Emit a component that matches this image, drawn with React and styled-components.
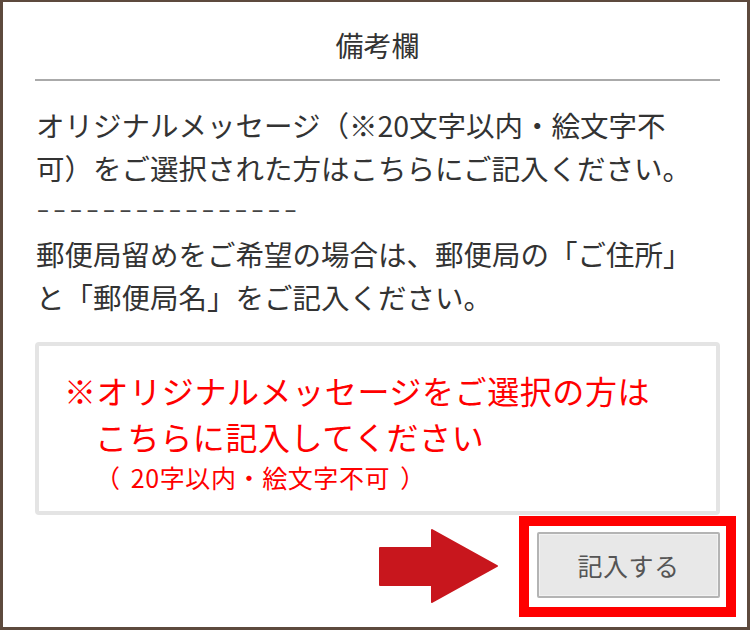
import React from 'react';
import styled, { createGlobalStyle } from 'styled-components';

const GlobalStyle = createGlobalStyle`
  html, body {
    margin: 0;
    padding: 0;
    background: #ffffff;
  }
  body {
    font-family: "Noto Sans CJK JP", "Noto Sans", sans-serif;
  }
`;

const Frame = styled.div`
  box-sizing: border-box;
  width: 750px;
  height: 630px;
  border-style: solid;
  border-color: #5d4a3d;
  border-width: 2px 3px 3px 3px;
  padding: 0 27px 10px 32px;
  background: #ffffff;
  display: flex;
  flex-direction: column;
  color: #333333;
`;

const Header = styled.h2`
  margin: 0;
  padding: 22px 0 13px;
  line-height: 42px;
  font-size: 28px;
  font-weight: 400;
  text-align: center;
  color: #333333;
  border-bottom: 2px solid #aaaaaa;
`;

const Notes = styled.div`
  margin: 22px 0 24px;
  font-size: 28.5px;
  line-height: 43px;
  white-space: nowrap;
`;

const Line = styled.div`
  padding-left: 1px;
`;

const Dashes = styled.div`
  padding-left: 2px;
  font-family: "DejaVu Sans", sans-serif;
  font-size: 24px;
  letter-spacing: 4.5px;
  color: #444444;
`;

const InputBox = styled.div`
  box-sizing: border-box;
  height: 173px;
  border: 4px solid #e4e4e4;
  border-radius: 4px;
  padding: 21px 0 16px 25px;
  color: #ff0000;
  white-space: nowrap;
`;

const Placeholder = styled.div`
  font-size: ${(p) => (p.small ? '25px' : '32px')};
  line-height: ${(p) => (p.small ? '36px' : '46px')};
  font-weight: 400;
  padding-left: ${(p) => (p.indent ? '31px' : '0')};
  letter-spacing: 0.6px;
  word-spacing: ${(p) => (p.small ? '4px' : '0')};
`;

const ActionRow = styled.div`
  margin-top: 1px;
  margin-right: -16px;
  display: flex;
  justify-content: flex-end;
  align-items: center;
  gap: 20px;
`;

const Arrow = styled.svg`
  display: block;
  width: 120px;
  height: 76px;
  margin-top: -1px;
`;

const Highlight = styled.div`
  box-sizing: border-box;
  width: 217px;
  height: 101px;
  border: 10px solid #ff0000;
  padding: 6px 6px 9px 8px;
  display: flex;
`;

const SubmitButton = styled.button`
  flex: 1;
  box-sizing: border-box;
  background: #e8e8e8;
  border: 2px solid #b4b4b4;
  border-radius: 2px;
  box-shadow: inset 0 0 0 1px #f2f2f2;
  font-family: "Noto Sans CJK JP", "Noto Sans", sans-serif;
  font-size: 25px;
  color: #555555;
  letter-spacing: 0.5px;
  cursor: pointer;
`;

export default function App() {
  return (
    <>
      <GlobalStyle />
      <Frame>
        <Header>備考欄</Header>
        <Notes>
          <Line>オリジナルメッセージ（※20文字以内・絵文字不</Line>
          <Line>可）をご選択された方はこちらにご記入ください。</Line>
          <Dashes>––––––––––––––––</Dashes>
          <Line>郵便局留めをご希望の場合は、郵便局の「ご住所」</Line>
          <Line>と「郵便局名」をご記入ください。</Line>
        </Notes>
        <InputBox>
          <Placeholder>※オリジナルメッセージをご選択の方は</Placeholder>
          <Placeholder indent>こちらに記入してください</Placeholder>
          <Placeholder indent small>（ 20字以内・絵文字不可 ）</Placeholder>
        </InputBox>
        <ActionRow>
          <Arrow viewBox="0 0 120 76">
            <path
              d="M1 20 H53 V2 L118 38 L53 74 V57 H1 Z"
              fill="#c8161d"
              stroke="#c8161d"
              strokeWidth="2"
              strokeLinejoin="round"
            />
          </Arrow>
          <Highlight>
            <SubmitButton type="button">記入する</SubmitButton>
          </Highlight>
        </ActionRow>
      </Frame>
    </>
  );
}
